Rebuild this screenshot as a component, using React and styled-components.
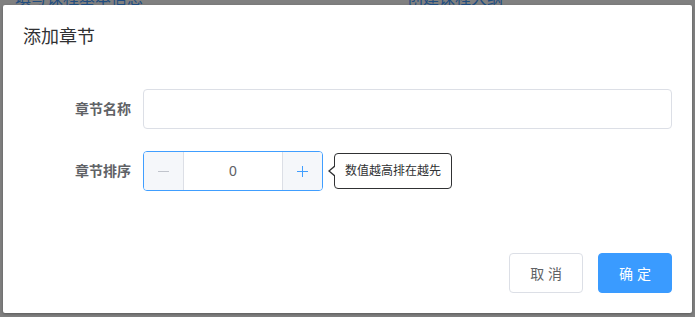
import React from "react";
import styled, { createGlobalStyle } from "styled-components";

const GlobalStyle = createGlobalStyle`
  html, body {
    margin: 0;
    padding: 0;
    background: #808080;
  }
  body {
    font-family: "Liberation Sans", "Noto Sans CJK SC", sans-serif;
    -webkit-font-smoothing: antialiased;
  }
`;

const Page = styled.div`
  width: 695px;
  height: 317px;
  overflow: hidden;
  background: #808080;
`;

const Backdrop = styled.div`
  height: 5px;
  overflow: hidden;
  display: flex;
  padding-left: 15px;
`;

const StepTitle = styled.div`
  width: ${(p) => p.width}px;
  margin-top: -9px;
  font-size: 16px;
  line-height: 16px;
  color: #204d80;
`;

const Dialog = styled.div`
  width: 689px;
  margin-left: 3px;
  background: #fff;
  border-radius: 2px;
  box-shadow: 0 1px 3px rgba(0, 0, 0, 0.3);
`;

const Header = styled.div`
  padding: 20px 20px 10px;
`;

const Title = styled.span`
  display: block;
  font-size: 18px;
  line-height: 24px;
  color: #303133;
`;

const Body = styled.div`
  padding: 30px 20px;
`;

const FormItem = styled.div`
  display: flex;
  margin-bottom: 22px;
`;

const Label = styled.label`
  width: 120px;
  flex-shrink: 0;
  box-sizing: border-box;
  padding-right: 12px;
  text-align: right;
  font-size: 14px;
  line-height: 40px;
  font-weight: 600;
  color: #606266;
`;

const Content = styled.div`
  flex: 1;
  position: relative;
`;

const TextInput = styled.input`
  width: 100%;
  height: 40px;
  box-sizing: border-box;
  border: 1px solid #dcdfe6;
  border-radius: 4px;
  padding: 0 15px;
  font-size: 14px;
  color: #606266;
  outline: none;
  font-family: inherit;
`;

const NumberBox = styled.div`
  position: relative;
  width: 180px;
  height: 40px;
  box-sizing: border-box;
  border: 1px solid #409eff;
  border-radius: 4px;
  display: flex;
`;

const StepButton = styled.span`
  width: 39px;
  height: 38px;
  flex-shrink: 0;
  background: #f5f7fa;
  display: flex;
  align-items: center;
  justify-content: center;
  color: ${(p) => (p.$muted ? "#c0c4cc" : "#409eff")};
  border-left: ${(p) => (p.$side === "right" ? "1px solid #dcdfe6" : "none")};
  border-right: ${(p) => (p.$side === "left" ? "1px solid #dcdfe6" : "none")};
  border-radius: ${(p) => (p.$side === "left" ? "3px 0 0 3px" : "0 3px 3px 0")};
`;

const NumberValue = styled.span`
  flex: 1;
  text-align: center;
  font-size: 14px;
  line-height: 38px;
  color: #606266;
`;

const Tip = styled.div`
  position: absolute;
  left: calc(100% + 12px);
  top: 50%;
  transform: translateY(-50%);
  background: #fff;
  border: 1px solid #303133;
  border-radius: 4px;
  padding: 10px;
  font-size: 12px;
  line-height: 14px;
  color: #303133;
  white-space: nowrap;

  &::before,
  &::after {
    content: "";
    position: absolute;
    top: 50%;
    transform: translateY(-50%);
    border-style: solid;
    border-color: transparent;
  }
  &::before {
    left: -7px;
    border-width: 6px 7px 6px 0;
    border-right-color: #303133;
  }
  &::after {
    left: -5px;
    border-width: 5px 6px 5px 0;
    border-right-color: #fff;
  }
`;

const Footer = styled.div`
  padding: 10px 20px 20px;
  display: flex;
  justify-content: flex-end;
  gap: 15px;
`;

const Button = styled.button`
  height: 40px;
  padding: 0 20px;
  box-sizing: border-box;
  border-radius: 4px;
  font-size: 14px;
  font-family: inherit;
  cursor: pointer;
  border: 1px solid ${(p) => (p.$primary ? "#3a9bff" : "#dcdfe6")};
  background: ${(p) => (p.$primary ? "#3a9bff" : "#fff")};
  color: ${(p) => (p.$primary ? "#fff" : "#606266")};
`;

const MinusIcon = () => (
  <svg width="11" height="12" viewBox="0 0 11 12">
    <path d="M0 6.5h11" stroke="currentColor" strokeWidth="1" />
  </svg>
);

const PlusIcon = () => (
  <svg width="11" height="12" viewBox="0 0 11 12">
    <path d="M0 6.5h11M5.5 1v11" stroke="currentColor" strokeWidth="1" />
  </svg>
);

export default function App() {
  return (
    <>
      <GlobalStyle />
      <Page>
        <Backdrop>
          <StepTitle width={392}>填写课程基本信息</StepTitle>
          <StepTitle width={200}>创建课程大纲</StepTitle>
        </Backdrop>
        <Dialog>
          <Header>
            <Title>添加章节</Title>
          </Header>
          <Body>
            <FormItem>
              <Label>章节名称</Label>
              <Content>
                <TextInput />
              </Content>
            </FormItem>
            <FormItem>
              <Label>章节排序</Label>
              <Content>
                <NumberBox>
                  <StepButton $side="left" $muted>
                    <MinusIcon />
                  </StepButton>
                  <NumberValue>0</NumberValue>
                  <StepButton $side="right">
                    <PlusIcon />
                  </StepButton>
                  <Tip>数值越高排在越先</Tip>
                </NumberBox>
              </Content>
            </FormItem>
          </Body>
          <Footer>
            <Button>取 消</Button>
            <Button $primary>确 定</Button>
          </Footer>
        </Dialog>
      </Page>
    </>
  );
}
